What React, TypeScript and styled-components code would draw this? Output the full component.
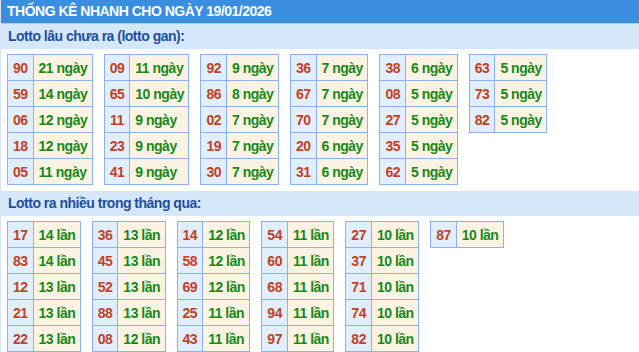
import React from "react";
import styled, { createGlobalStyle } from "styled-components";

const Global = createGlobalStyle`
  html, body { margin: 0; padding: 0; background: #ffffff; }
  body { font-family: "Liberation Sans", Arial, sans-serif; }
`;

const Page = styled.div`
  border-left: 1px solid #d9e4ef;
  min-height: 352px;
`;

const Header = styled.div`
  height: 23px;
  line-height: 23px;
  background: #3a8ddf;
  color: #ffffff;
  font-size: 14px;
  letter-spacing: -0.5px;
  font-weight: bold;
  padding-left: 6px;
  border-bottom: 1px solid #b8cde2;
  white-space: nowrap;
`;

const SectionTitle = styled.div<{ $top?: number }>`
  height: 25px;
  line-height: 25px;
  background: #d5e8fb;
  color: #1d4f9e;
  font-size: 14px;
  letter-spacing: -0.5px;
  font-weight: bold;
  padding-left: 7px;
  margin-top: ${(p) => p.$top ?? 0}px;
`;

const TableRow = styled.div`
  display: flex;
  align-items: flex-start;
  gap: 11px;
  padding: 5px 0 0 6px;
`;

const Table = styled.table`
  border-collapse: collapse;
  border: 1px solid #8db0f2;
  font-size: 14px;
  letter-spacing: -0.5px;
  font-weight: bold;
`;

const NumCell = styled.td`
  border: 1px solid #8db0f2;
  background: #e1eefd;
  color: #c2411f;
  height: 25px;
  padding: 0 5px;
  text-align: center;
  white-space: nowrap;
`;

const ValCell = styled.td`
  border: 1px solid #8db0f2;
  background: #fdf3e2;
  color: #16891a;
  height: 25px;
  padding: 0 4.5px 0 5px;
  white-space: nowrap;
`;

type Item = [string, number];

const gan: Item[][] = [
  [["90", 21], ["59", 14], ["06", 12], ["18", 12], ["05", 11]],
  [["09", 11], ["65", 10], ["11", 9], ["23", 9], ["41", 9]],
  [["92", 9], ["86", 8], ["02", 7], ["19", 7], ["30", 7]],
  [["36", 7], ["67", 7], ["70", 7], ["20", 6], ["31", 6]],
  [["38", 6], ["08", 5], ["27", 5], ["35", 5], ["62", 5]],
  [["63", 5], ["73", 5], ["82", 5]],
];

const nhieu: Item[][] = [
  [["17", 14], ["83", 14], ["12", 13], ["21", 13], ["22", 13]],
  [["36", 13], ["45", 13], ["52", 13], ["88", 13], ["08", 12]],
  [["14", 12], ["58", 12], ["69", 12], ["25", 11], ["43", 11]],
  [["54", 11], ["60", 11], ["68", 11], ["94", 11], ["97", 11]],
  [["27", 10], ["37", 10], ["71", 10], ["74", 10], ["82", 10]],
  [["87", 10]],
];

const Group: React.FC<{ data: Item[][]; unit: string }> = ({ data, unit }) => (
  <TableRow>
    {data.map((t, i) => (
      <Table key={i}>
        <tbody>
          {t.map(([n, v]) => (
            <tr key={n}>
              <NumCell>{n}</NumCell>
              <ValCell>
                {v} {unit}
              </ValCell>
            </tr>
          ))}
        </tbody>
      </Table>
    ))}
  </TableRow>
);

export default function App() {
  return (
    <>
      <Global />
      <Page>
        <Header>THỐNG KÊ NHANH CHO NGÀY 19/01/2026</Header>
        <SectionTitle>Lotto lâu chưa ra (lotto gan):</SectionTitle>
        <Group data={gan} unit="ngày" />
        <SectionTitle $top={6}>Lotto ra nhiều trong tháng qua:</SectionTitle>
        <Group data={nhieu} unit="lần" />
      </Page>
    </>
  );
}
